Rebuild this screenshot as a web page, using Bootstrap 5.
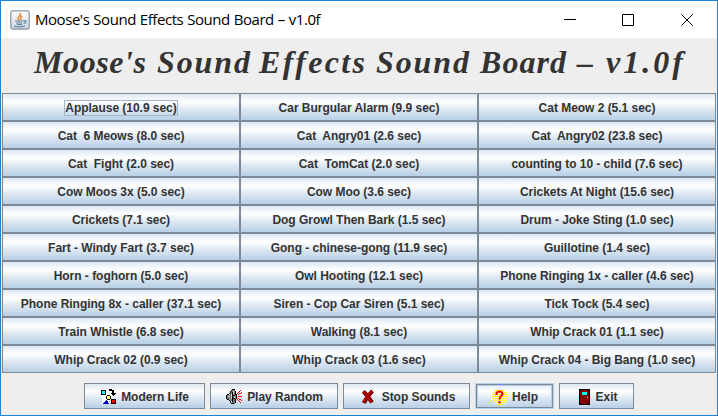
<!DOCTYPE html>
<html lang="en">
<head>
<meta charset="utf-8">
<title>Moose's Sound Effects Sound Board – v1.0f</title>
<link href="https://cdn.jsdelivr.net/npm/bootstrap@5.3.0/dist/css/bootstrap.min.css" rel="stylesheet">
<style>
  body { font-family: "Liberation Sans", Arial, sans-serif; background: #eee; color: #333; }
  .app-window { width: 718px; height: 416px; border: 1px solid #1883d7; }
  .title-bar { height: 37px; padding-left: 9px; color: #000; }
  .title-label { font: 15px/20px "Segoe UI", "Open Sans", sans-serif; letter-spacing: -.45px; word-spacing: .5px; margin: -1px 0 0 5px; }
  .heading { height: 55px; }
  .heading text { font: italic bold 32px "Monotype Corsiva", "Liberation Serif", serif; fill: #333; }
  .sound-grid { margin: 0 1px; }
  .metal { border: 1px solid #7a8a99; border-radius: 0; padding: 0; color: #333; font-size: 12px; font-weight: 700; line-height: 16px; letter-spacing: -.03px; white-space: pre;
    background: linear-gradient(#dde8f3, #fff 30%, #dde8f3 60%, #b8cfe5); }
  .metal:hover { color: #333; border-color: #7a8a99; }
  .sound-grid .metal { height: 28px; padding: 2px 0 0; }
  .focus-text { outline: 1px solid #a3b8cc; }
  .actions { margin: 10px 0 0 83px; gap: 5px; }
  .actions .metal { height: 26px; gap: 4px; padding: 1px 0 0 1px; }
  .w-modern { width: 121px; } .w-play { width: 128px; } .w-stop { width: 127px; } .w-help { width: 79px; } .w-exit { width: 75px; }
  .actions .w-help { border-color: #b8cfe5; box-shadow: inset 0 0 0 1px #7a8a99, inset 0 0 0 2px #b8cfe5; }
</style>
<script src="https://cdn.jsdelivr.net/npm/bootstrap@5.3.0/dist/js/bootstrap.bundle.min.js"></script>
</head>
<body class="overflow-hidden">
<div class="app-window d-flex flex-column">
  <header class="title-bar bg-white d-flex align-items-center">
    <svg width="20" height="20" viewBox="0 0 20 20">
      <defs><linearGradient id="jv" x2="0" y2="1"><stop stop-color="#fff"/><stop offset="1" stop-color="#cdd6dd"/></linearGradient></defs>
      <rect x=".8" y=".8" width="18.4" height="18.2" rx="2" fill="url(#jv)" stroke="#8b9cac" stroke-width="1.3"/>
      <path d="M10 3q1 2-1 3.500t0 4M12 6q-2 1-1 4" fill="none" stroke="#ee8a3c" stroke-width="1.500"/>
      <path d="M5 11h9q2-1 2 .5T13.500 13.500M6 13h6M7 14.500h5M4 16q5 1.500 11 0" fill="none" stroke="#5d7f9b" stroke-width="1.200"/>
    </svg>
    <span class="title-label text-nowrap">Moose's Sound Effects Sound Board – v1.0f</span>
    <svg class="ms-auto" width="170" height="36" viewBox="547 1 170 36" fill="none" stroke="#000">
      <path d="M564 18.500h12M622.500 13.500h11v11h-11zM681.300 13.300l11.400 11.400M692.700 13.300l-11.400 11.400"/>
    </svg>
  </header>
  <h1 class="heading m-0 lh-1">
    <svg class="d-block" width="716" height="54" viewBox="1 38 716 54">
      <text y="73"><tspan x="34" textLength="112">Moose's</tspan> <tspan x="157" textLength="93">Sound</tspan> <tspan x="259" textLength="106">Effects</tspan> <tspan x="376" textLength="93">Sound</tspan> <tspan x="480" textLength="86">Board</tspan> <tspan x="577" textLength="18">–</tspan> <tspan x="606" textLength="77">v1.0f</tspan></text>
    </svg>
  </h1>
  <main class="sound-grid row row-cols-3 g-0" id="sounds"></main>
  <footer class="actions d-flex">
    <button class="btn metal w-modern d-flex align-items-center justify-content-center"><svg width="16" height="16" shape-rendering="crispEdges"><path fill="#fff" d="M1 6h7v9H1z"/><path d="M0 1h5v5H0zM10 10h5v5h-5z"/><path fill="#0ff" d="M1 2h3v3H1z"/><path fill="red" d="M11 11h3v3h-3z"/><path d="M8 0h3v1h2v3h2v1h-1v1h-1v1h-1V6h-1V5h-1V4h1V2H8zM5 7h1V6h3v1h1v3H9v1H6v-1H5z"/><path fill="#ff6" d="M6 7h3v3H6z"/><path fill="#00c" d="M5 11h1v1h1v2h1v1H2v-1h1v-1h1v-1h1z"/></svg><span>Modern Life</span></button>
    <button class="btn metal w-play d-flex align-items-center justify-content-center"><svg width="17" height="16" shape-rendering="crispEdges"><path fill="#777" d="M1 6h3V4h1V2h1V1h3v1h1v11H9v2H7v-1H6v-2H4v-2H1z"/><path d="M0 6h1v4H0zM1 5h2v1H1zM1 10h2v1H1zM3 4h1v1H3zM4 2h1v2H4zM5 1h1v1H5zM6 0h3v1H6zM3 11h1v1H3zM4 12h1v2H4zM5 14h3v1H5zM6 3h1v10H6zM9 2h1v4H9zM10 5h1v5h-1zM9 10h1v4H9zM7 6h2v1H7zM7 9h2v1H7z"/><path fill="#ccc" d="M2 7h2v1H2zM7 2h1v3H7zM5 5h1v5H5zM8 7h1v2H8z"/><path d="M11 5l4-4M12 7.500h4M12 5.500l4-2M12 9.500l4 2M11 10l4 4" stroke="#f00" fill="none"/></svg><span>Play Random</span></button>
    <button class="btn metal w-stop d-flex align-items-center justify-content-center"><svg width="19" height="16"><path d="M4.500 2.500Q9 7 13 13.500M13.500 2Q8 7 5 14" stroke="#500" stroke-width="4" fill="none"/><path d="M4 2.500Q9 7 12.500 13.500M13 2Q8 7 4 13.500" stroke="#b00000" stroke-width="2.500" fill="none"/></svg><span>Stop Sounds</span></button>
    <button class="btn metal w-help d-flex align-items-center justify-content-center"><svg width="16" height="16"><defs><pattern id="dots" width="2" height="2" patternUnits="userSpaceOnUse"><path fill="#ff0" d="M0 0h2v2H0z"/><path fill="#fff" d="M0 0h1v1H0z"/></pattern></defs><path d="M5 0h6v1h2v2h2v2h1v6h-1v2h-2v2h-2v1H5v-1H3v-2H1v-2H0V5h1V3h2V1h2z" fill="url(#dots)" shape-rendering="crispEdges"/><path d="M4.500 6V4.500Q5 2.500 7.500 2.500T10.500 5Q10.500 6 9 7T7.500 10.500M7.500 12v2.500" fill="none" stroke="#f00000" stroke-width="2"/></svg><span>Help</span></button>
    <button class="btn metal w-exit d-flex align-items-center justify-content-center"><svg width="15" height="16" shape-rendering="crispEdges"><path d="M2 0h11v16H2z"/><path fill="maroon" d="M3 1h9v14H3z"/><path fill="#0ff" d="M5 3h5v3H5z"/><path fill="#ff0" d="M10 8h1v1h-1z"/></svg><span>Exit</span></button>
  </footer>
</div>
<script>
  const sounds = ["Applause (10.9 sec)","Car Burgular Alarm (9.9 sec)","Cat Meow 2 (5.1 sec)","Cat  6 Meows (8.0 sec)","Cat  Angry01 (2.6 sec)","Cat  Angry02 (23.8 sec)","Cat  Fight (2.0 sec)","Cat  TomCat (2.0 sec)","counting to 10 - child (7.6 sec)","Cow Moos 3x (5.0 sec)","Cow Moo (3.6 sec)","Crickets At Night (15.6 sec)","Crickets (7.1 sec)","Dog Growl Then Bark (1.5 sec)","Drum - Joke Sting (1.0 sec)","Fart - Windy Fart (3.7 sec)","Gong - chinese-gong (11.9 sec)","Guillotine (1.4 sec)","Horn - foghorn (5.0 sec)","Owl Hooting (12.1 sec)","Phone Ringing 1x - caller (4.6 sec)","Phone Ringing 8x - caller (37.1 sec)","Siren - Cop Car Siren (5.1 sec)","Tick Tock (5.4 sec)","Train Whistle (6.8 sec)","Walking (8.1 sec)","Whip Crack 01 (1.1 sec)","Whip Crack 02 (0.9 sec)","Whip Crack 03 (1.6 sec)","Whip Crack 04 - Big Bang (1.0 sec)"];
  document.getElementById("sounds").innerHTML = sounds.map((s, i) =>
    `<div class="col"><button class="btn metal w-100 d-block"><span${i ? "" : ' class="focus-text"'}>${s}</span></button></div>`).join("");
</script>
</body>
</html>
